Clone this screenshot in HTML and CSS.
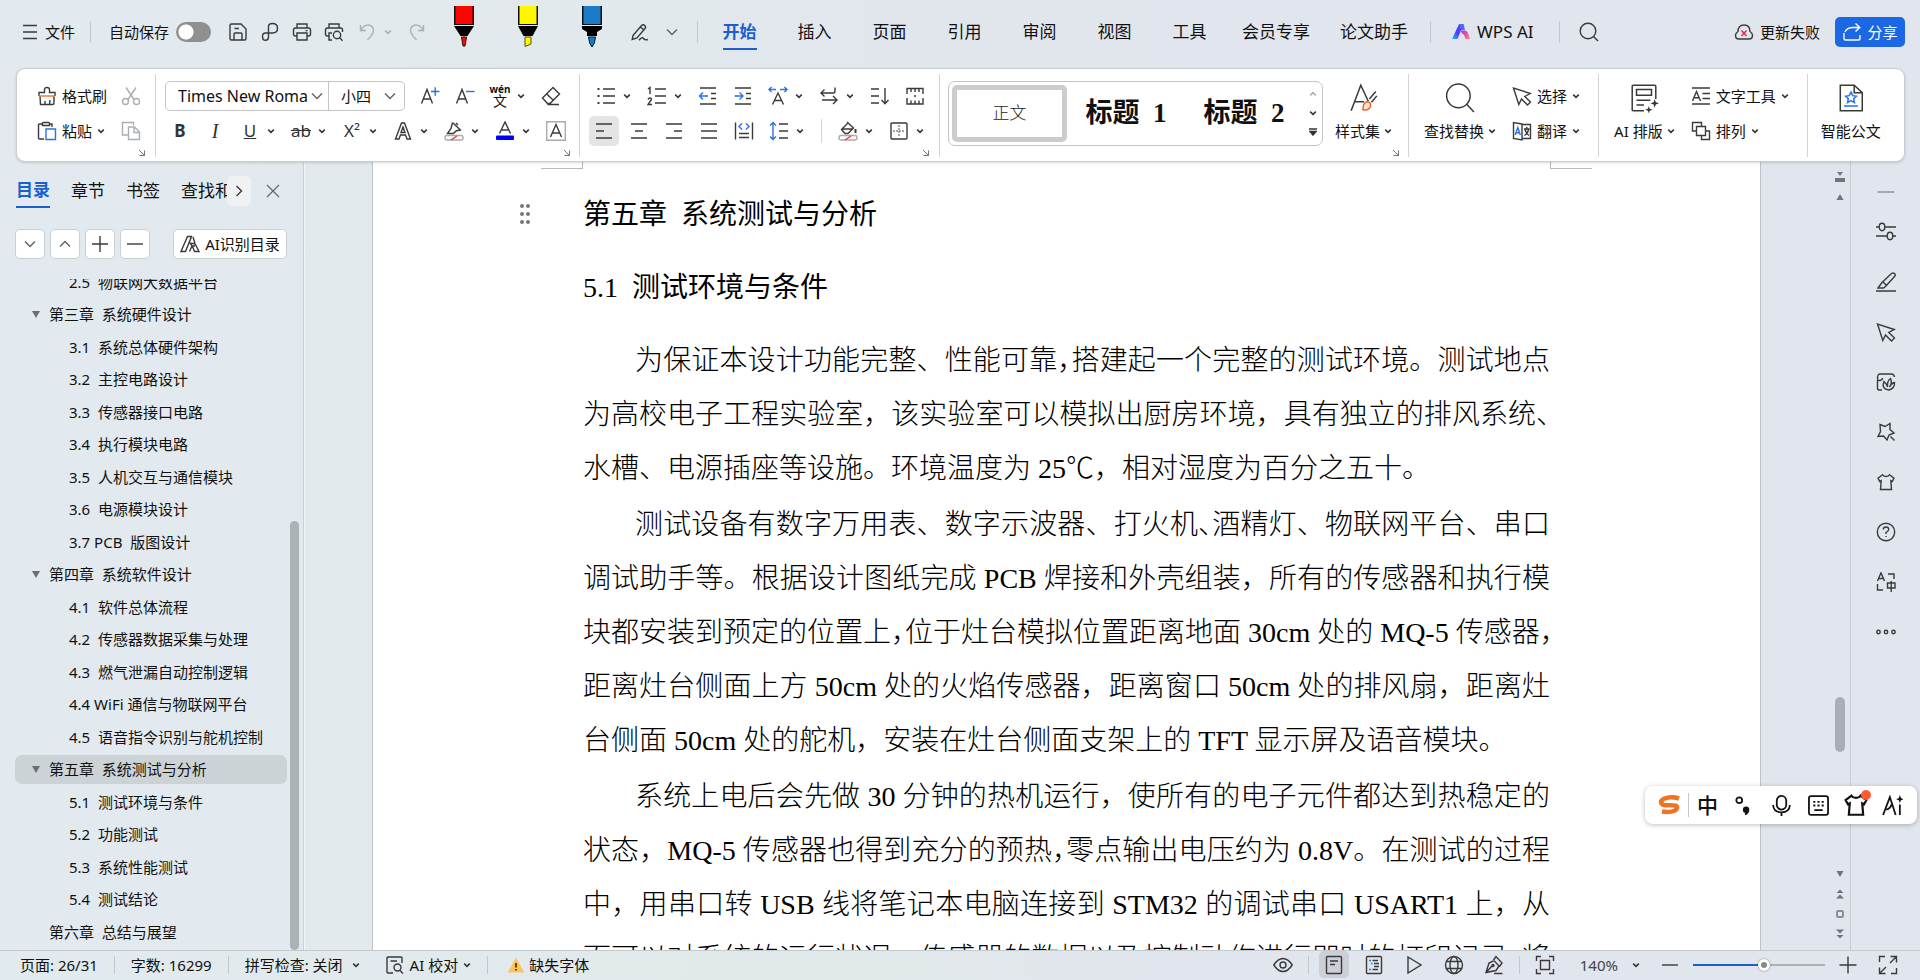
FILE: index.html
```html
<!DOCTYPE html>
<html lang="zh-CN">

<head>
    <meta charset="UTF-8">
    <meta name="viewport" content="width=device-width, initial-scale=1.0">
    <title>WPS 文字</title>
    <link rel="stylesheet" href="styles.css">
</head>

<body>
    <svg class="sprite" aria-hidden="true">
        <symbol id="chev" viewBox="0 0 8 8"><path d="M1.2 2.6 4 5.4 6.8 2.6"/></symbol>
        <symbol id="chev-l" viewBox="0 0 12 12"><path d="M1 3.5 6 8.5 11 3.5"/></symbol>
        <symbol id="corner" viewBox="0 0 8 8"><path d="M1 1 6.5 6.5M6.5 1.5V6.5H1.5"/></symbol>
        <symbol id="shirt" viewBox="0 0 20 20"><path d="M6.5 2.8C7.5 5 12.5 5 13.500 2.800L18 6.200 16.200 9.500 14.800 8.800 15.500 17.500H4.500L5.200 8.800 3.800 9.500 2 6.200Z"/></symbol>
        <symbol id="cursor" viewBox="0 0 20 20"><path d="M1.500 2 6.800 18.500 9.500 13 15.500 19 18.500 16 12.800 10.500 18.300 7.500Z"/></symbol>
    </svg>

    <header class="topbar">
        <button class="menu-btn"><svg class="ic" viewBox="0 0 20 20"><path d="M3 3.500H17M3 10H17M3 16.500H17"/></svg>文件</button>
        <span class="bar-sep"></span>
        <label class="autosave">自动保存<input type="checkbox" class="switch"></label>
        <div class="quick">
            <button aria-label="保存"><svg class="ic" viewBox="0 0 20 20"><path d="M2 3.500Q2 2 3.500 2H13L18 7V16.500Q18 18 16.500 18H3.500Q2 18 2 16.500ZM6 18V12Q6 11 7 11H13Q14 11 14 12V18M6.500 6.500H11"/></svg></button>
            <button aria-label="输出为PDF"><svg class="ic" viewBox="0 0 20 20"><path d="M8.500 15V4.500Q8.500 1.500 12.500 1.500 17.500 1.500 17.500 6.300 17.500 11 12.500 11H5.500Q2.500 11 2.500 14.500 2.500 18.300 5.500 18.300 8.500 18.300 8.500 15"/></svg></button>
            <button aria-label="打印"><svg class="ic" viewBox="0 0 20 20"><path d="M5 6V2H15V6M5 14H3.500Q1.500 14 1.500 12V8Q1.500 6 3.500 6H16.500Q18.500 6 18.500 8V12Q18.500 14 16.500 14H15M5 11H15V18H5ZM13.500 8.600H15.500"/></svg></button>
            <button aria-label="打印预览"><svg class="ic" viewBox="0 0 20 20"><path d="M5 6V2H15V6M5 14H3.500Q1.500 14 1.500 12V8Q1.500 6 3.500 6H16.500Q18.500 6 18.500 8V10M8 18H5V11H8"/><circle cx="13" cy="13" r="3.700"/><path d="M15.700 15.700 18.500 18.700"/></svg></button>
            <button class="faded undo" aria-label="撤销"><svg class="ic" viewBox="0 0 20 20"><path d="M2.500 3V8.500H8M3 8C6 2.500 12 1.500 14.800 5.500 17.500 10 13 14 9.500 18"/></svg></button>
            <button class="faded tiny" aria-label="撤销列表"><svg class="chev"><use href="#chev"/></svg></button>
            <button class="faded redo" aria-label="恢复"><svg class="ic" viewBox="0 0 20 20"><path d="M17.500 3V8.500H12M17 8C14 2.500 8 1.500 5.200 5.500 2.500 10 7 14 10.500 18"/></svg></button>
        </div>
        <div class="pens">
            <button aria-label="红色笔"><svg viewBox="0 0 20 42"><path d="M0 0H20V19H0Z" fill="#111"/><path d="M1.500 0H18.500V18H1.500Z" fill="#f80600"/><path d="M0 20H20L13.500 30H6.500Z" fill="#000"/><path d="M7.500 31H12.500L11 40H9Z" fill="#f01010" stroke="#400"/></svg></button>
            <button aria-label="黄色荧光笔"><svg viewBox="0 0 20 42"><path d="M0 0H20V19H0Z" fill="#111"/><path d="M1.500 0H18.500V18H1.500Z" fill="#fff700"/><path d="M0 20H20L14.500 30H5.500Z" fill="#000"/><path d="M7 31H13V38L7 40.500Z" fill="#fff700" stroke="#550"/></svg></button>
            <button aria-label="蓝色笔"><svg viewBox="0 0 20 42"><path d="M0 0H20V19H0Z" fill="#111"/><path d="M1.500 0H18.500V18H1.500Z" fill="#1c7bc9"/><path d="M0 20H20V23L15 26V30H5V26L0 23Z" fill="#000"/><path d="M6.500 31H13.500Q13 38 10 41 7 38 6.500 31Z" fill="#1c7bc9" stroke="#023"/></svg></button>
        </div>
        <div class="quick">
            <button aria-label="绘图"><svg class="ic" viewBox="0 0 20 20"><path d="M3 13.500 11.500 3.500Q13 2 14.700 3.400 16.300 5 15 6.500L7 16 2.200 17.500ZM10.500 5 14 8M9 18.300Q12 14.500 13.500 16.500T18 17.500"/></svg></button>
            <button class="more" aria-label="更多"><svg class="chev-l"><use href="#chev-l"/></svg></button>
        </div>
        <span class="bar-sep tab-sep"></span>
        <nav class="tabs">
            <button class="tab active"><span>开始</span></button>
            <button class="tab"><span>插入</span></button>
            <button class="tab"><span>页面</span></button>
            <button class="tab"><span>引用</span></button>
            <button class="tab"><span>审阅</span></button>
            <button class="tab"><span>视图</span></button>
            <button class="tab"><span>工具</span></button>
            <button class="tab"><span>会员专享</span></button>
            <button class="tab"><span>论文助手</span></button>
        </nav>
        <span class="bar-sep"></span>
        <button class="wps-ai"><svg viewBox="0 0 20 20"><defs><linearGradient id="ga" x1="0" y1="1" x2="1" y2="0"><stop offset="0" stop-color="#1fc0ff"/><stop offset=".4" stop-color="#4646ff"/><stop offset="1" stop-color="#5a3cf5"/></linearGradient><linearGradient id="gb" x1="0" y1="0" x2="1" y2="1"><stop offset="0" stop-color="#c218ff"/><stop offset="1" stop-color="#ff8a6a"/></linearGradient></defs><path d="M8 2H12.500L6.500 17H1Z" fill="url(#ga)"/><path d="M8 2H12.500L14 8H10Z" fill="#4b6bff"/><path d="M9.500 8.500H14Q16 8.500 17 11L19 17H14.500L13 13Q12.500 12 11.500 12Z" fill="url(#gb)"/></svg>WPS AI</button>
        <span class="bar-sep search-sep"></span>
        <button class="search" aria-label="搜索"><svg class="ic" viewBox="0 0 20 20"><circle cx="9" cy="9" r="7.800"/><path d="M14.500 14.500 19 19"/></svg></button>
        <div class="account">
            <button class="sync"><svg class="ic" viewBox="0 0 20 20"><path d="M5 17Q1.500 17 1.500 13.500 1.500 11 4 9.500 4 3 10 3T16 9.500Q18.500 11 18.500 13.500 18.500 17 15 17Z"/><path d="M7.500 8.500 12.500 14M12.500 8.500 7.500 14" stroke="#e0283c"/></svg>更新失败</button>
            <button class="share"><svg class="ic" viewBox="0 0 20 20"><path d="M2 11V16.500Q2 18 3.500 18H16.500Q18 18 18 16.500V13M3 10Q5 5.500 11 5.500H17.500M13.500 1.500 17.700 5.500 13.500 9.500"/></svg>分享</button>
        </div>
    </header>

    <section class="ribbon">
        <div class="group group-clip">
            <div class="row">
                <button class="labeled"><svg class="ic" viewBox="0 0 20 20"><path d="M2 10V6.500H7.500V3.500Q7.500 1.500 10 1.500T12.500 3.500V6.500H18V10M3 10 3.500 18.500H15.500Q17 18.500 17 17V10M8 18.500V15M12.500 18.500 13 14"/><path d="M2 10H18" stroke="#e8792e"/></svg>格式刷</button>
                <button class="tool faded" aria-label="剪切"><svg class="ic" viewBox="0 0 20 20"><path d="M5 1.500 13 13.500M15 1.500 7 13.500"/><circle cx="4.500" cy="15.500" r="3"/><circle cx="15.500" cy="15.500" r="3"/></svg></button>
            </div>
            <div class="row">
                <button class="labeled"><svg class="ic" viewBox="0 0 20 20"><path d="M5 3H2.500Q1.500 3 1.500 4V17Q1.500 18 2.500 18H7M13 3H15V6M5.500 4.500V2.500Q5.500 1.500 6.500 1.500H11.500Q12.500 1.500 12.500 2.500V4.500Z"/><path d="M9 8H18.500V18.500H9Z" stroke="#2f6fe0"/></svg>粘贴<svg class="chev"><use href="#chev"/></svg></button>
                <button class="tool faded" aria-label="复制"><svg class="ic" viewBox="0 0 20 20"><path d="M7 14H1.500V1.500H12.500V4.500M7.500 6H13.500L18.500 11V18.500H7.500ZM13 6V11.500H18.500"/></svg></button>
            </div>
            <button class="launch" aria-label="剪贴板"><svg><use href="#corner"/></svg></button>
        </div>

        <div class="group group-font">
            <div class="row">
                <div class="combo">
                    <span class="pick font-name"><select aria-label="字体"><option>Times New Roman</option></select><svg class="chev-l"><use href="#chev-l"/></svg></span>
                    <span class="pick font-size"><select aria-label="字号"><option>小四</option></select><svg class="chev-l"><use href="#chev-l"/></svg></span>
                </div>
                <button class="tool grow" aria-label="增大字号"><svg class="ic" viewBox="0 0 20 20"><path d="M1.500 17.500 7 3.500 12.500 17.500M3.500 13H10.500"/><path d="M11 5.500H19.500M15.200 1.200V9.700" stroke="#2672e8"/></svg></button>
                <button class="tool" aria-label="减小字号"><svg class="ic" viewBox="0 0 20 20"><path d="M1.500 17.500 7 3.500 12.500 17.500M3.500 13H10.500"/><path d="M11 5.500H19.500" stroke="#2672e8"/></svg></button>
                <button class="tool drop" aria-label="拼音指南"><span class="pinyin"><small>wén</small>文</span><svg class="chev"><use href="#chev"/></svg></button>
                <button class="tool" aria-label="清除格式"><svg class="ic" viewBox="0 0 20 20"><path d="M12 1.500 18.500 8 9 17.500H6.500L1.500 12ZM5.500 7.800 12.300 14.300M6.500 18.500H18"/></svg></button>
            </div>
            <div class="row">
                <button class="tool letter"><b>B</b></button>
                <button class="tool letter"><i>I</i></button>
                <button class="tool drop letter"><u>U</u><svg class="chev"><use href="#chev"/></svg></button>
                <button class="tool drop letter"><s>ab</s><svg class="chev"><use href="#chev"/></svg></button>
                <button class="tool drop letter"><span>X²</span><svg class="chev"><use href="#chev"/></svg></button>
                <button class="tool drop" aria-label="文字效果"><svg class="ic" viewBox="0 0 20 20"><path d="M2.500 18 8.500 2H11.500L17.500 18H14L12.500 14H7.500L6 18ZM8 11.500 10 6 12 11.500Z"/></svg><svg class="chev"><use href="#chev"/></svg></button>
                <button class="tool drop" aria-label="突出显示"><svg class="ic" viewBox="0 0 20 20"><path d="M9 2 17 9.500M8.500 1.500 7 7.500 3.500 12.500H9.500L12 10 16 9"/><path d="M12 2 14 4"/><rect x="1" y="14.500" width="18" height="4.500" rx="2" stroke="#aaa"/><path d="M7 19 13 15" stroke="#e33"/></svg><svg class="chev"><use href="#chev"/></svg></button>
                <button class="tool drop" aria-label="字体颜色"><svg class="ic" viewBox="0 0 20 20"><path d="M4.500 12.500 10 1 15.500 12.500M6.500 9H13.500"/><rect x="1" y="14.500" width="18" height="4.500" rx="1" fill="#0000f5" stroke="none"/></svg><svg class="chev"><use href="#chev"/></svg></button>
                <button class="tool" aria-label="字符底纹"><svg class="ic" viewBox="0 0 20 20"><path d="M.700.700H19.300V19.300H.700Z" stroke="#aaa"/><path d="M4.500 16 10 3.500 15.500 16M6.500 12H13.500"/></svg></button>
            </div>
            <button class="launch" aria-label="字体设置"><svg><use href="#corner"/></svg></button>
        </div>

        <div class="group group-para">
            <div class="row">
                <button class="tool drop" aria-label="项目符号"><svg class="ic" viewBox="0 0 20 20"><path d="M7 3H19M7 10H19M7 17H19"/><path d="M1.500 3H3.500M1.500 10H3.500M1.500 17H3.500" stroke-width="2"/></svg><svg class="chev"><use href="#chev"/></svg></button>
                <button class="tool drop" aria-label="编号"><svg class="ic" viewBox="0 0 20 20"><path d="M8 3H19M8 10H19M8 17H19M1 3 3 1.500V8M1 13.500Q1.500 12 3 12T4.500 13.500L1 18.500H5"/></svg><svg class="chev"><use href="#chev"/></svg></button>
                <button class="tool" aria-label="减少缩进"><svg class="ic" viewBox="0 0 20 20"><path d="M2 2H18M13 7.500H18M13 12.500H18M2 18H18"/><path d="M10 10H2M5 6.500 1.500 10 5 13.500" stroke="#2672e8"/></svg></button>
                <button class="tool" aria-label="增加缩进"><svg class="ic" viewBox="0 0 20 20"><path d="M2 2H18M13 7.500H18M13 12.500H18M2 18H18"/><path d="M1.500 10H9.500M6.500 6.500 10 10 6.500 13.500" stroke="#2672e8"/></svg></button>
                <button class="tool drop" aria-label="字符缩放"><svg class="ic" viewBox="0 0 20 20"><path d="M4.500 18.500 10 7 15.500 18.500M6.500 14.500H13.500"/><path d="M1 3.500H8M12 3.500H19M3.500 1 1 3.500 3.500 6M16.500 1 19 3.500 16.500 6" stroke="#2672e8"/></svg><svg class="chev"><use href="#chev"/></svg></button>
                <button class="tool drop" aria-label="换行显示"><svg class="ic" viewBox="0 0 20 20"><path d="M16 1.500V5Q16 7 14 7H2M5.500 3.500 2 7 5.500 10.500M3 14H17.500M14 10 18 14 14 18"/></svg><svg class="chev"><use href="#chev"/></svg></button>
                <button class="tool" aria-label="排序"><svg class="ic" viewBox="0 0 20 20"><path d="M1 3H9M1 10H9M1 17H9M15 2V17.500M11.500 14 15 17.800 18.500 14"/></svg></button>
                <button class="tool" aria-label="制表位"><svg class="ic" viewBox="0 0 20 20"><path d="M2 8V2.500H18V8M6 3V6M10 3V6M14 3V6M2 12V18H18V12M6 17.500V14.500M10 17.500V14.500M14 17.500V14.500M9 10H11"/></svg></button>
            </div>
            <div class="row">
                <button class="tool on" aria-label="左对齐"><svg class="ic" viewBox="0 0 20 20"><path d="M2 3H18M2 10H10M2 17H18"/></svg></button>
                <button class="tool" aria-label="居中"><svg class="ic" viewBox="0 0 20 20"><path d="M2 3H18M6 10H14M2 17H18"/></svg></button>
                <button class="tool" aria-label="右对齐"><svg class="ic" viewBox="0 0 20 20"><path d="M2 3H18M10 10H18M2 17H18"/></svg></button>
                <button class="tool" aria-label="两端对齐"><svg class="ic" viewBox="0 0 20 20"><path d="M2 3H18M2 10H18M2 17H18"/></svg></button>
                <button class="tool" aria-label="分散对齐"><svg class="ic" viewBox="0 0 20 20"><path d="M1.500 1.500V18.500M18.500 1.500V18.500M5 12.500H15M5 16.500H15"/><path d="M8 2.500 5 5.500 8 8.500M12 2.500 15 5.500 12 8.500" stroke="#2672e8"/></svg></button>
                <button class="tool drop" aria-label="行距"><svg class="ic" viewBox="0 0 20 20"><path d="M10 3H19M10 10H19M10 17H19"/><path d="M4 1.500V18.500M1 4.500 4 1.500 7 4.500M1 15.500 4 18.500 7 15.500" stroke="#2672e8"/></svg><svg class="chev"><use href="#chev"/></svg></button>
                <span class="row-sep"></span>
                <button class="tool drop" aria-label="底纹颜色"><svg class="ic" viewBox="0 0 20 20"><path d="M9 1 15.500 7 10 12.500H7L3.500 8.500 9.500 2.500M3.500 8H15"/><path d="M17.500 8V12" stroke-width="2"/><rect x="1" y="14.500" width="18" height="4.500" rx="2" stroke="#aaa"/><path d="M7 19 13 15" stroke="#e33"/></svg><svg class="chev"><use href="#chev"/></svg></button>
                <button class="tool drop" aria-label="边框"><svg class="ic" viewBox="0 0 20 20"><rect x="2" y="2" width="16" height="16" rx="1"/><path d="M10 4V16M4 10H16" stroke="#888" stroke-dasharray="2 1"/></svg><svg class="chev"><use href="#chev"/></svg></button>
            </div>
            <button class="launch" aria-label="段落设置"><svg><use href="#corner"/></svg></button>
        </div>

        <div class="group group-style">
            <div class="wide">
                <div class="gallery">
                    <button class="style style-on">正文</button>
                    <button class="style style-title">标题&nbsp; 1</button>
                    <button class="style style-title">标题&nbsp; 2</button>
                    <div class="gallery-nav">
                        <button class="faded" aria-label="上一行"><svg class="chev up"><use href="#chev"/></svg></button>
                        <button aria-label="下一行"><svg class="chev"><use href="#chev"/></svg></button>
                        <button aria-label="展开"><svg class="chev" viewBox="0 0 8 8"><path d="M0 1H8"/><path d="M1 3.500H7L4 7Z" fill="#333"/></svg></button>
                    </div>
                </div>
                <button class="big"><svg class="ic" viewBox="0 0 28 28"><path d="M2 26 11 2 18 17M5.500 17.500H14M19 15 25 8M21 18 26 12"/><path d="M13 25Q13 18 17 17.500 21 18 20 22 18.500 26 13 25Z" stroke="#e8682e" fill="#fde3d4"/></svg><span>样式集<svg class="chev"><use href="#chev"/></svg></span></button>
            </div>
            <button class="launch" aria-label="样式设置"><svg><use href="#corner"/></svg></button>
        </div>

        <div class="group group-mixed">
            <button class="big"><svg class="ic" viewBox="0 0 28 28"><circle cx="12.500" cy="12" r="11"/><path d="M20.500 20 27 27"/></svg><span>查找替换<svg class="chev"><use href="#chev"/></svg></span></button>
            <div class="stack">
                <button class="labeled"><svg class="ic"><use href="#cursor"/></svg>选择<svg class="chev"><use href="#chev"/></svg></button>
                <button class="labeled"><svg class="ic" viewBox="0 0 20 20"><path d="M10 3 1.500 1.500V17.500L10 19ZM10 3.500H18.500V17.500H10M12 8H17.500M14.700 6V8M12.500 14.500Q16 12.500 16.500 8.500M13 8.500Q14 12.500 17 14.500"/><path d="M3.200 14 5.800 6.500 8.300 14M4 11.800H7.500" stroke="#2672e8"/></svg>翻译<svg class="chev"><use href="#chev"/></svg></button>
            </div>
        </div>

        <div class="group group-mixed">
            <button class="big"><svg class="ic" viewBox="0 0 28 28"><path d="M14 26H4Q3 26 3 25V3Q3 2 4 2H24Q25 2 25 3V15M7 6H21V11.500H7ZM7 16H20M7 20.500H14M7 16"/><path d="M24 15 25 18 28 19 25 20 24 23 23 20 20 19 23 18ZM18.500 21.500 19.300 24 22 25 19.300 26 18.500 28.500 17.700 26 15 25 17.700 24Z" fill="#333" stroke="none"/></svg><span>AI 排版<svg class="chev"><use href="#chev"/></svg></span></button>
            <div class="stack">
                <button class="labeled"><svg class="ic" viewBox="0 0 20 20"><path d="M1 2H19M1 18H19M11.500 7.500H19M11.500 12.500H19M1.500 15 5.500 5.500 9.500 15M3 11.700H8"/></svg>文字工具<svg class="chev"><use href="#chev"/></svg></button>
                <button class="labeled"><svg class="ic" viewBox="0 0 20 20"><path d="M5 10H1.500V1.500H10.500V5M5.500 5.500H14.500V14.500H5.500ZM10.500 15V18.500H18.500V10H15"/></svg>排列<svg class="chev"><use href="#chev"/></svg></button>
            </div>
        </div>

        <div class="group group-mixed group-last">
            <button class="big"><svg class="ic" viewBox="0 0 28 28"><path d="M4 2H17L24.500 9V26H4ZM17 2V9H24.500"/><path d="M14 8.500 15.600 11.800 19 12.300 16.500 14.700 17.200 18.300 14 16.500 10.800 18.300 11.500 14.700 9 12.300 12.400 11.800ZM7.500 21.500H20.500" stroke="#2672e8"/></svg><span>智能公文</span></button>
        </div>
    </section>

    <main class="work">
        <aside class="sidebar">
            <nav class="side-tabs">
                <button class="side-tab active"><span>目录</span></button>
                <button class="side-tab">章节</button>
                <button class="side-tab">书签</button>
                <button class="side-tab cut">查找和替换</button>
                <button class="side-next" aria-label="更多标签"><svg class="ic" viewBox="0 0 12 12"><path d="M3.500 1 8.500 6 3.500 11"/></svg></button>
                <button class="side-close" aria-label="关闭"><svg class="ic" viewBox="0 0 14 14"><path d="M1 1 13 13M13 1 1 13"/></svg></button>
            </nav>
            <div class="side-tools">
                <button aria-label="展开"><svg class="chev-l"><use href="#chev-l"/></svg></button>
                <button aria-label="收起"><svg class="chev-l up"><use href="#chev-l"/></svg></button>
                <button aria-label="增加级别"><svg class="ic" viewBox="0 0 20 20"><path d="M2 10H18M10 2V18"/></svg></button>
                <button aria-label="降低级别"><svg class="ic" viewBox="0 0 20 20"><path d="M2 10H18"/></svg></button>
                <button class="side-ai"><svg class="ic" viewBox="0 0 20 20"><path d="M7.500 2.500 1 17.500H5.500L11.500 2.500ZM11.500 2.500 9.500 8 12 12H15M12 12 9.500 17.500M11 9.500H13.500Q15 9.500 16 11.500L19 17.500H14.500L12.500 12.500M13 3 15 9.500"/></svg>AI识别目录</button>
            </div>
            <div class="toc-wrap">
                <ul class="toc">
                    <li class="sub">2.5&nbsp; 物联网大数据平台</li>
                    <li class="chapter">第三章&nbsp; 系统硬件设计</li>
                    <li class="sub">3.1&nbsp; 系统总体硬件架构</li>
                    <li class="sub">3.2&nbsp; 主控电路设计</li>
                    <li class="sub">3.3&nbsp; 传感器接口电路</li>
                    <li class="sub">3.4&nbsp; 执行模块电路</li>
                    <li class="sub">3.5&nbsp; 人机交互与通信模块</li>
                    <li class="sub">3.6&nbsp; 电源模块设计</li>
                    <li class="sub">3.7 PCB&nbsp; 版图设计</li>
                    <li class="chapter">第四章&nbsp; 系统软件设计</li>
                    <li class="sub">4.1&nbsp; 软件总体流程</li>
                    <li class="sub">4.2&nbsp; 传感器数据采集与处理</li>
                    <li class="sub">4.3&nbsp; 燃气泄漏自动控制逻辑</li>
                    <li class="sub">4.4 WiFi 通信与物联网平台</li>
                    <li class="sub">4.5&nbsp; 语音指令识别与舵机控制</li>
                    <li class="chapter current">第五章&nbsp; 系统测试与分析</li>
                    <li class="sub">5.1&nbsp; 测试环境与条件</li>
                    <li class="sub">5.2&nbsp; 功能测试</li>
                    <li class="sub">5.3&nbsp; 系统性能测试</li>
                    <li class="sub">5.4&nbsp; 测试结论</li>
                    <li class="chapter leaf">第六章&nbsp; 总结与展望</li>
                </ul>
                <div class="toc-scroll"><span></span></div>
            </div>
        </aside>

        <div class="canvas">
            <article class="page">
                <span class="crop crop-left"></span>
                <span class="crop crop-right"></span>
                <svg class="grip" viewBox="0 0 10 20"><path d="M2 2h.01M8 2h.01M2 10h.01M8 10h.01M2 18h.01M8 18h.01"/></svg>
                <h1>第五章&nbsp; 系统测试与分析</h1>
                <h2>5.1&nbsp; 测试环境与条件</h2>
                <p>为保证本设计功能完整、性能可靠<span class="half">，</span>搭建起一个完整的测试环境。测试地点<br>
                    为高校电子工程实验室，该实验室可以模拟出厨房环境，具有独立的排风系统<span class="half">、</span><br>
                    <span class="last">水槽、电源插座等设施。环境温度为 25℃，相对湿度为百分之五十。</span></p>
                <p>测试设备有数字万用表、数字示波器、打火机<span class="half">、</span>酒精灯、物联网平台、串口<br>
                    调试助手等。根据设计图纸完成 PCB 焊接和外壳组装，所有的传感器和执行模<br>
                    块都安装到预定的位置上<span class="half">，</span>位于灶台模拟位置距离地面 30cm 处的 MQ-5 传感器<span class="half">，</span><br>
                    距离灶台侧面上方 50cm 处的火焰传感器，距离窗口 50cm 处的排风扇，距离灶<br>
                    <span class="last">台侧面 50cm 处的舵机，安装在灶台侧面支架上的 TFT 显示屏及语音模块。</span></p>
                <p>系统上电后会先做 30 分钟的热机运行，使所有的电子元件都达到热稳定的<br>
                    状态，MQ-5 传感器也得到充分的预热<span class="half">，</span>零点输出电压约为 0.8V。在测试的过程<br>
                    中，用串口转 USB 线将笔记本电脑连接到 STM32 的调试串口 USART1 上，从<br>
                    而可以对系统的运行状况，传感器的数据以及控制动作进行即时的打印记录<span class="half">，</span>将</p>
            </article>
        </div>

        <div class="scroll">
            <svg class="mark" viewBox="0 0 10 10"><path d="M2 0H8L5 4ZM0 6H10V10H0Z"/></svg>
            <svg class="mark" viewBox="0 0 10 10"><path d="M5 2 8.500 8H1.500Z"/></svg>
            <span class="scroll-space"><span class="thumb"></span></span>
            <svg class="mark" viewBox="0 0 10 10"><path d="M5 8 8.500 2H1.500Z"/></svg>
            <svg class="mark" viewBox="0 0 10 10"><path d="M5 .500 8.500 4H1.500ZM5 5.500 9 9.500H1Z"/></svg>
            <svg class="mark" viewBox="0 0 10 10"><rect x="2" y="2" width="6" height="6" rx="1" fill="none" stroke="#70747a" stroke-width="1.500"/></svg>
            <svg class="mark" viewBox="0 0 10 10"><path d="M5 9.500 8.500 6H1.500ZM5 4.500 9 .500H1Z"/></svg>
        </div>

        <aside class="rail">
            <button class="rail-min" aria-label="收起"><svg class="ic" viewBox="0 0 20 20"><path d="M1.500 10H18.500" stroke="#8a8d92"/></svg></button>
            <button aria-label="属性"><svg class="ic" viewBox="0 0 20 20"><path d="M0 5H3M9 5H20M0 14H11M17 14H20"/><ellipse cx="6" cy="5" rx="2.800" ry="3.700"/><ellipse cx="14" cy="14" rx="2.800" ry="3.700"/></svg></button>
            <button aria-label="编辑"><svg class="ic" viewBox="0 0 20 20"><path d="M0 19H20M2 16 6 10.500 15.500 1.500Q17 .500 18.500 1.500 20 3 18.500 4.500L10 14 7.500 16ZM7 10 10.500 13.500"/></svg></button>
            <button aria-label="选择"><svg class="ic"><use href="#cursor"/></svg></button>
            <button aria-label="图库"><svg class="ic" viewBox="0 0 20 20"><path d="M6 18H3Q1.500 18 1.500 16.500V8M18.500 5Q18 2 15.500 2H4Q1.500 2 1.500 6 1.500 9 4 8.500 6.500 8 6.500 6M13 18Q5 17 8 9.500 11 12 11.500 15 11 9 14.500 6.500 16.500 11 13.500 15 15.500 11 18.500 10.500 19 16 13 18Z"/></svg></button>
            <button aria-label="收藏"><svg class="ic" viewBox="0 0 20 20"><path d="M4 2.500 9 4.500 14 1.500V7.500L18 11 13 13 11 18 7.500 14 2 14.500 4.500 9.500ZM14.500 14.500 18.500 18.500"/></svg></button>
            <button aria-label="皮肤"><svg class="ic"><use href="#shirt"/></svg></button>
            <button aria-label="帮助"><svg class="ic" viewBox="0 0 20 20"><circle cx="10" cy="10" r="8.700"/><path d="M7.300 7.500Q7.300 5 10 5T12.700 7.500Q12.700 9 10 10.500V12M10 14V15"/></svg></button>
            <button aria-label="翻译"><svg class="ic" viewBox="0 0 20 20"><path d="M1.500 9 5 .800 8.500 9M2.500 6.500H7.500M12 2H18V7M1.500 12V18H7M11.500 11H19V16H11.500ZM15.200 9V20"/></svg></button>
            <button aria-label="更多"><svg class="ic" viewBox="0 0 20 20"><circle cx="2.500" cy="10" r="1.700"/><circle cx="10" cy="10" r="1.700"/><circle cx="17.500" cy="10" r="1.700"/></svg></button>
        </aside>
    </main>

    <footer class="status">
        <span>页面: 26/31</span>
        <span class="bar-sep"></span>
        <span>字数: 16299</span>
        <span class="bar-sep"></span>
        <button>拼写检查: 关闭<svg class="chev far"><use href="#chev"/></svg></button>
        <button class="proof"><svg class="ic" viewBox="0 0 20 20"><path d="M17 8V3Q17 2 16 2H3Q2 2 2 3V17Q2 18 3 18H8M5.500 6H12"/><circle cx="12.500" cy="12.500" r="3.500"/><path d="M15 15.500 18 18.500"/></svg>AI 校对<svg class="chev"><use href="#chev"/></svg></button>
        <span class="bar-sep"></span>
        <button><svg class="warn" viewBox="0 0 16 16"><path d="M8 1.500 15.500 15H.500Z" fill="#f8c45c" stroke="#f8c45c"/><path d="M8 6V10.500M8 12V13.500" stroke="#6b4300" stroke-width="2"/></svg>缺失字体</button>
        <div class="status-right">
            <button class="view" aria-label="护眼"><svg class="ic" viewBox="0 0 20 20"><path d="M.800 10Q5 3.500 10 3.500T19.200 10Q15 16.500 10 16.500T.800 10Z"/><circle cx="10" cy="10" r="3"/></svg></button>
            <span class="bar-sep"></span>
            <button class="view on" aria-label="页面视图"><svg class="ic" viewBox="0 0 20 20"><rect x="2.500" y="1.500" width="15" height="17" rx="1"/><path d="M6 6H14M6 9.500H11"/></svg></button>
            <button class="view" aria-label="大纲视图"><svg class="ic" viewBox="0 0 20 20"><rect x="2.500" y="1.500" width="15" height="17" rx="1"/><path d="M8.500 5.500H14M10 8.500H15M10 11.500H15M8.500 14.500H14"/><path d="M5 5.500H7M7 8.500H8.500M5 14.500H7" stroke="#2672e8"/></svg></button>
            <button class="view" aria-label="阅读视图"><svg class="ic" viewBox="0 0 20 20"><path d="M4 2 17 10 4 18Z"/></svg></button>
            <button class="view" aria-label="网页视图"><svg class="ic" viewBox="0 0 20 20"><circle cx="10" cy="10" r="8.500"/><ellipse cx="10" cy="10" rx="4" ry="8.500"/><path d="M2.500 6.500H17.500M2.500 13.500H17.500"/></svg></button>
            <button class="view" aria-label="写作模式"><svg class="ic" viewBox="0 0 20 20"><path d="M2 17.500 5 8 10 5.500 15 11 12 15.500ZM9.500 5 12 1.500 18 8 15.500 11.500M2.500 17 8 11M10 18.500H18.500"/><circle cx="9" cy="10.500" r="1"/></svg></button>
            <span class="bar-sep"></span>
            <button class="view fit" aria-label="最佳显示比例"><svg class="ic" viewBox="0 0 20 20"><path d="M1.500 6V1.500H6M14 1.500H18.500V6M18.500 14V18.500H14M6 18.500H1.500V14M5.500 5.500H14.500V14.500H5.500Z"/></svg></button>
            <button class="zoom">140%<svg class="chev far"><use href="#chev"/></svg></button>
            <button class="view" aria-label="缩小"><svg class="ic" viewBox="0 0 20 20"><path d="M2 10H18"/></svg></button>
            <input type="range" class="zoom-range" min="0" max="100" value="54" aria-label="显示比例">
            <button class="view" aria-label="放大"><svg class="ic" viewBox="0 0 20 20"><path d="M1.500 10H18.500M10 1.500V18.500"/></svg></button>
            <button class="view full" aria-label="全屏"><svg class="ic" viewBox="0 0 20 20"><path d="M1.500 7V1.500H7M13 18.500H18.500V13M12.500 1.500H18.500V7.500M18 2 12 8M7.500 18.500H1.500V12.500M2 18 8 12"/></svg></button>
        </div>
    </footer>

    <div class="ime">
        <button class="ime-logo" aria-label="输入法"><svg viewBox="0 0 24 24"><path d="M21 5.500Q13 2.800 6.500 5.500C1 8 2.500 12 8.500 12.200 15 12.500 19.500 11.500 19 15 18 19 10 19.500 4 18.500" fill="none" stroke="#ee7420" stroke-width="4.500"/></svg></button>
        <span class="bar-sep"></span>
        <button class="ime-cn">中</button>
        <button aria-label="标点"><svg class="ic" viewBox="0 0 20 20"><circle cx="5" cy="5" r="2.800"/><circle cx="11.500" cy="14" r="2.200" fill="#111"/><path d="M13.500 14Q13.500 17.500 10.500 18.500"/></svg></button>
        <button aria-label="语音"><svg class="ic" viewBox="0 0 20 20"><rect x="5.500" y="0.900" width="9" height="13" rx="4.500"/><path d="M2 9.500Q2.500 16.500 10 16.500T18 9.500M10 16.500V20"/></svg></button>
        <button aria-label="软键盘"><svg class="ic" viewBox="0 0 20 20"><rect x=".900" y="1" width="18.200" height="18" rx="2"/><path d="M5 6.500H7M9 6.500H11M13 6.500H15M5 10H7M9 10H11M13 10H15M6 14.500H14"/></svg></button>
        <button class="ime-skin" aria-label="皮肤"><svg class="ic"><use href="#shirt"/></svg><span class="dot"></span></button>
        <button aria-label="AI 助手"><svg class="ic" viewBox="0 0 20 20"><path d="M1 19 7.500 2 13 19M4 14Q8 13 9 9M17 9V19"/><path d="M17 0 18 2.800 20.500 4 18 5 17 7.500 16 5 13.500 4 16 2.800Z" fill="#111" stroke="none"/></svg></button>
    </div>
</body>

</html>
```
FILE: styles.css
```css
* {
    padding: 0;
    margin: 0;
    box-sizing: border-box;
}

body {
    height: 100vh;
    display: flex;
    flex-direction: column;
    overflow: hidden;
    font-family: "Noto Sans", "Noto Sans CJK SC", sans-serif;
    font-size: 15px;
    line-height: 20px;
    color: #111;
    background: linear-gradient(to right, #e2eaf0, #e1e9ec 30%, #e1e6ed 50%, #e1e5ed);
}

button,
select,
input {
    font: inherit;
    color: inherit;
    background: none;
    border: none;
}

button {
    display: flex;
    align-items: center;
    justify-content: center;
    white-space: nowrap;
}

svg {
    flex: none;
}

.sprite {
    display: none;
}

.ic {
    width: 20px;
    height: 20px;
    fill: none;
    stroke: #3a3a3a;
    stroke-width: 1.4;
}

.chev {
    width: 8px;
    height: 8px;
    fill: none;
    stroke: #333;
    stroke-width: 1.5;
}

.chev-l {
    width: 12px;
    height: 12px;
    fill: none;
    stroke: #666;
    stroke-width: 1.5;
}

.up {
    transform: scaleY(-1);
}

.faded svg {
    stroke: #aaafb3;
}

.bar-sep {
    width: 1px;
    height: 22px;
    background: #c3c8cc;
}

/* top bar */

.topbar {
    height: 68px;
    padding: 0 15px 4px 20px;
    display: flex;
    align-items: center;
}

.menu-btn {
    gap: 5px;
    margin-right: 15px;
}

.autosave {
    display: flex;
    align-items: center;
    gap: 7px;
    margin: 0 11px 0 18px;
}

.switch {
    appearance: none;
    width: 35px;
    height: 20px;
    border-radius: 10px;
    background: radial-gradient(circle at 10px 10px, #fff 7px, #8f8f8f 8px);
}

.quick {
    display: flex;
}

.quick button {
    width: 32px;
    height: 32px;
}

.quick .undo {
    margin-left: 2px;
}

.quick .tiny {
    width: 8px;
}

.quick .redo {
    margin-left: 8px;
}

.quick .more {
    margin-right: 9px;
}

.pens {
    display: flex;
    align-self: flex-start;
    padding-top: 6px;
}

.pens button {
    width: 64px;
}

.pens svg {
    width: 20px;
    height: 42px;
}

.tab-sep {
    margin-right: 4px;
}

.tabs {
    display: flex;
    margin-right: 7px;
}

.tab {
    min-width: 75px;
    padding: 0 15px;
    font-size: 17px;
}

.tab span {
    padding: 5px 0 4px;
    line-height: 24px;
    border-bottom: 2px solid transparent;
}

.tab.active,
.side-tab.active {
    color: #1b5fcf;
    font-weight: bold;
}

.tab.active span,
.side-tab.active span {
    border-color: #1b5fcf;
}

.wps-ai {
    gap: 6px;
    margin: 0 25px 0 20px;
    font-size: 17px;
}

.wps-ai svg {
    width: 20px;
    height: 20px;
}

.search {
    margin-left: 19px;
}

.account {
    margin-left: auto;
    display: flex;
    gap: 15px;
}

.sync {
    gap: 6px;
}

.share {
    width: 70px;
    height: 30px;
    gap: 5px;
    border-radius: 5px;
    color: #fff;
    background: #1c67e3;
}

.share svg {
    stroke: #fff;
}

/* ribbon */

.ribbon {
    height: 94px;
    margin: 0 15px 0 16px;
    display: flex;
    align-items: center;
    position: relative;
    z-index: 2;
    border: 1px solid #c8cdd2;
    border-radius: 9px;
    background: #fff;
    box-shadow: 0 1px 3px rgba(0, 0, 0, .15);
}

.group {
    height: 83px;
    padding-top: 7px;
    display: flex;
    flex-direction: column;
    gap: 5px;
    border-right: 1px solid #d4d4d4;
}

.row {
    height: 30px;
    display: flex;
    align-items: center;
    gap: 5px;
}

.launch {
    align-self: flex-end;
    margin-top: -2px;
}

.launch svg {
    width: 8px;
    height: 8px;
    fill: none;
    stroke: #777;
}

.labeled {
    height: 30px;
    gap: 5px;
    justify-content: flex-start;
}

.tool {
    width: 30px;
    height: 30px;
    border-radius: 5px;
}

.tool.on {
    background: #e4e4e4;
}

.drop {
    width: 46px;
    padding: 0 6px 0 5px;
    justify-content: space-between;
}

.letter {
    font-size: 17px;
    color: #333;
}

.letter i {
    font-family: "Liberation Serif", serif;
    font-size: 20px;
}

.letter u,
.letter s,
.letter span {
    width: 20px;
    text-align: center;
}

.pinyin {
    width: 20px;
    display: flex;
    flex-direction: column;
    align-items: center;
    line-height: 13px;
    font-size: 14px;
}

.pinyin small {
    line-height: 9px;
    font-size: 10px;
    font-weight: bold;
}

.group-clip {
    padding-left: 20px;
    padding-right: 9px;
}

.group-clip .row {
    justify-content: space-between;
    gap: 9px;
}

.group-font {
    padding-left: 9px;
    padding-right: 8px;
}

.combo {
    width: 240px;
    height: 30px;
    display: flex;
    border: 1px solid #c4c4c4;
    border-radius: 5px;
}

.pick {
    display: flex;
    align-items: center;
    padding: 0 8px 0 12px;
}

.pick select {
    flex: 1;
    min-width: 0;
    appearance: none;
}

.font-name {
    width: 163px;
    padding-right: 5px;
    gap: 3px;
    border-right: 1px solid #c4c4c4;
    font-size: 16px;
}

.font-size {
    flex: 1;
}

.grow {
    margin-left: 5px;
}

.group-para {
    padding-left: 9px;
    padding-right: 9px;
}

.group-para .row:first-child {
    padding-left: 2px;
}

.row-sep {
    width: 1px;
    height: 24px;
    margin: 0 6px;
    background: #d4d4d4;
}

.group-style {
    padding-left: 8px;
    padding-right: 8px;
}

.wide {
    height: 65px;
    display: flex;
    gap: 12px;
    padding-right: 8px;
}

.gallery {
    width: 375px;
    padding: 3px 0 3px 3px;
    display: flex;
    border: 1px solid #c4c4c4;
    border-radius: 7px;
}

.style {
    width: 118px;
}

.style-on {
    width: 115px;
    border: 5px solid #ccc;
    border-radius: 5px;
    font-size: 17px;
    font-weight: 300;
    color: #222;
}

.style-title {
    font-family: "Liberation Serif", "Noto Sans CJK SC", serif;
    font-size: 27px;
    font-weight: bold;
}

.gallery-nav {
    flex: 1;
    display: flex;
    flex-direction: column;
    justify-content: space-around;
}

.big {
    height: 65px;
    padding-bottom: 5px;
    flex-direction: column;
    justify-content: space-between;
}

.big .ic {
    width: 30px;
    height: 30px;
    margin-top: 2px;
}

.big span {
    display: flex;
    align-items: center;
    gap: 4px;
}

.group-mixed {
    flex-direction: row;
    gap: 16px;
    padding-left: 15px;
    padding-right: 18px;
}

.stack {
    display: flex;
    flex-direction: column;
    gap: 5px;
}

.group-last {
    padding-left: 13px;
    border-right: none;
}

/* work area */

.work {
    flex: 1;
    min-height: 0;
    display: flex;
}

.sidebar {
    width: 304px;
    display: flex;
    flex-direction: column;
    border-right: 1px solid #cdd0d3;
    box-shadow: 1px 0 #f2f5f7;
}

.side-tabs {
    height: 57px;
    padding: 0 16px;
    display: flex;
    align-items: center;
    gap: 21px;
}

.side-tab {
    font-size: 17px;
}

.side-tab span {
    padding: 5px 0 4px;
    line-height: 24px;
    border-bottom: 2px solid transparent;
}

.side-tab.cut {
    flex: 1;
    min-width: 0;
    justify-content: flex-start;
    overflow: hidden;
}

.side-next {
    width: 24px;
    height: 30px;
    margin: 0 -6px 0 -21px;
    border-radius: 5px;
    background: #eff1f2;
}

.side-next svg {
    width: 12px;
    height: 12px;
}

.side-close {
    margin-right: 7px;
}

.side-close svg {
    width: 14px;
    height: 14px;
    stroke: #666;
    stroke-width: 1.2;
}

.side-tools {
    padding: 10px 15px 20px;
    display: flex;
    gap: 5px;
}

.side-tools button {
    width: 30px;
    height: 30px;
    border: 1px solid #c9d0d3;
    border-radius: 5px;
    background: #fff;
}

.side-tools .side-ai {
    width: 114px;
    margin-left: 18px;
    gap: 5px;
}

.toc-wrap {
    flex: 1;
    min-height: 0;
    display: flex;
    overflow: hidden;
}

.toc {
    flex: 1;
    padding-left: 15px;
    margin-top: -11px;
    list-style: none;
}

.toc li {
    height: 29px;
    margin-bottom: 3px;
    line-height: 29px;
    border-radius: 7px;
    display: flex;
    align-items: center;
    white-space: pre;
}

.toc li:nth-child(even) {
    margin-bottom: 4px;
}

.toc .sub {
    padding-left: 54px;
}

.chapter::before {
    content: "";
    margin: 0 9px 0 17px;
    border: 4px solid transparent;
    border-top: 7px solid #6a6e70;
    border-bottom: none;
}

.leaf::before {
    border-top-color: transparent;
}

.toc .current {
    background: #ccd3d6;
}

.toc-scroll {
    width: 16px;
    padding: 0 4px 0 3px;
    display: flex;
    flex-direction: column;
    justify-content: flex-end;
}

.toc-scroll span {
    height: 64%;
    border-radius: 5px;
    background: #aab2b5;
}

.canvas {
    flex: 1;
    padding: 0 68px;
    overflow: hidden;
}

.page {
    position: relative;
    max-width: 1390px;
    margin: 0 auto;
    padding: 26px 210px;
    font-family: "Liberation Serif", "Noto Sans CJK SC Light", "Noto Sans CJK SC", serif;
    font-size: 28px;
    line-height: 54px;
    color: #000;
    background: #fff;
    border: solid #bfc3c7;
    border-width: 0 1px;
}

.page h1,
.page h2 {
    font-family: "Liberation Serif", "Noto Sans CJK SC", serif;
    font-size: 28px;
    font-weight: 400;
    margin-bottom: 19px;
}

.page p {
    margin-bottom: 2px;
    text-indent: 52px;
    white-space: nowrap;
    text-align: justify;
    text-align-last: justify;
}

.page .last {
    display: inline-block;
    text-indent: 0;
    text-align-last: left;
}

/* squeezed punctuation */
.half {
    font-feature-settings: "halt";
}

.crop {
    position: absolute;
    top: 0;
    width: 42px;
    height: 7px;
    border-bottom: 1px solid #b8b8b8;
}

.crop-left {
    left: 168px;
    border-right: 1px solid #b8b8b8;
}

.crop-right {
    right: 168px;
    border-left: 1px solid #b8b8b8;
}

.grip {
    position: absolute;
    top: 42px;
    left: 147px;
    width: 10px;
    height: 20px;
    stroke: #777;
    stroke-width: 4;
    stroke-linecap: round;
}

.scroll {
    width: 22px;
    padding: 10px 0 11px;
    display: flex;
    flex-direction: column;
    align-items: center;
    gap: 10px;
    border-right: 1px solid #c9ccd2;
}

.mark {
    width: 10px;
    height: 10px;
    fill: #70747a;
}

.scroll-space {
    flex: 1;
    display: flex;
    flex-direction: column;
    justify-content: flex-end;
    padding-bottom: 107px;
}

.thumb {
    width: 10px;
    height: 55px;
    border-radius: 5px;
    background: #abaeb6;
}

.rail {
    width: 69px;
    padding-top: 15px;
}

.rail button {
    width: 100%;
    height: 50px;
}

.rail .rail-min {
    height: 30px;
}

/* status bar */

.status {
    height: 30px;
    padding: 0 13px 2px 20px;
    display: flex;
    align-items: center;
    gap: 16px;
    position: relative;
    border-top: 1px solid #c3cace;
    background: linear-gradient(to right, #e1eaef, #e1e9ea 45%, #e1e5ed 60%);
}

.status .bar-sep {
    height: 18px;
}

.status button {
    gap: 5px;
}

.status .far {
    margin-left: 4px;
}

.proof {
    margin-left: 9px;
}

.warn {
    width: 16px;
    height: 16px;
    margin-left: 4px;
}

.status-right {
    margin-left: auto;
    height: 100%;
    display: flex;
    align-items: center;
}

.status-right .bar-sep {
    margin: 0 5px;
}

.view {
    width: 30px;
    height: 100%;
    margin: 0 5px;
}

.view.on {
    border-radius: 5px;
    background: #cccfd5;
}

.zoom {
    margin: 0 10px 0 15px;
    color: #444;
}

.status .zoom .far {
    margin-left: 9px;
}

.zoom-range {
    appearance: none;
    width: 132px;
    height: 16px;
    margin: 0 3px;
    background: linear-gradient(to right, #1b5fcf 54%, #aeb1b6 54%) center / 100% 2px no-repeat;
}

.zoom-range::-webkit-slider-thumb {
    appearance: none;
    width: 12px;
    height: 12px;
    border: 3px solid #fff;
    border-radius: 50%;
    background: #888;
    box-shadow: 0 0 2px rgba(0, 0, 0, .5);
}

.view.full {
    margin-right: 4px;
}

/* floating input method bar */

.ime {
    position: absolute;
    right: 3px;
    bottom: 156px;
    z-index: 3;
    height: 38px;
    padding: 0 6px;
    display: flex;
    align-items: center;
    border-radius: 8px;
    background: #fff;
    box-shadow: 0 1px 5px rgba(0, 0, 0, .25);
}

.ime button {
    width: 37px;
    height: 38px;
}

.ime .ic {
    width: 21px;
    height: 21px;
    stroke: #111;
    stroke-width: 1.7;
}

.ime .ime-skin .ic {
    width: 26px;
    height: 26px;
}

.ime .ime-logo svg {
    width: 24px;
    height: 24px;
}

.ime .bar-sep {
    height: 24px;
    margin: 0;
}

.ime .ime-cn {
    font-size: 21px;
    font-weight: 500;
}

.ime-skin {
    position: relative;
}

.dot {
    position: absolute;
    top: 4px;
    right: 3px;
    width: 10px;
    height: 10px;
    border-radius: 50%;
    background: #ff5a30;
}
```
